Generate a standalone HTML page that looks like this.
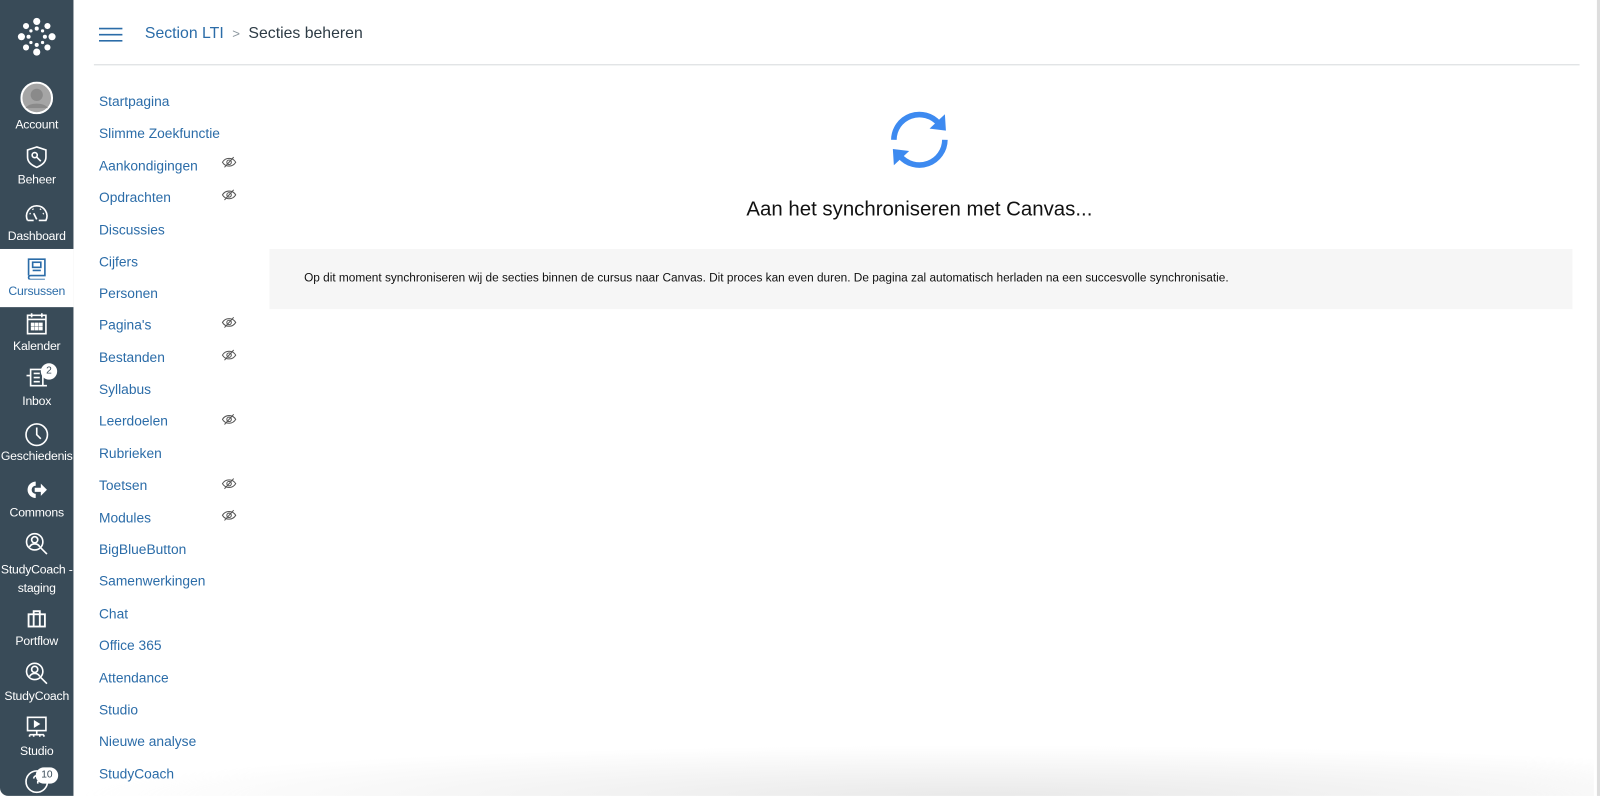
<!DOCTYPE html>
<html><head><meta charset="utf-8"><style>
*{margin:0;padding:0;box-sizing:border-box}
body{width:1600px;height:796px;overflow:hidden;background:#fff;font-family:"Liberation Sans",sans-serif;position:relative}
#wrap{position:absolute;left:0;top:0;width:1568px;height:780px;transform:scale(1.0204);transform-origin:0 0}
#side{position:absolute;left:0;top:0;width:72px;height:780px;background:#394b58;border-bottom-left-radius:8px}
.ic{position:absolute;left:24px}
.lbl{position:absolute;left:0;width:72px;text-align:center;color:#fff;font-size:12px;letter-spacing:-0.2px}
#cur{position:absolute;left:0;top:244px;width:72px;height:57px;background:#fff}
.cn{position:absolute;left:97px;color:#2b6ca8;font-size:13.5px}
.eye{position:absolute;left:217px}
#hdr{position:absolute;left:92px;top:63px;width:1456px;height:1px;background:#d7dadd}
.shadow{position:absolute;bottom:0;height:50px;background:radial-gradient(ellipse at 60% 100%,rgba(215,215,215,0.55),rgba(255,255,255,0) 70%);pointer-events:none}
</style></head><body><div id="wrap">
<div id="side">
<svg class="ic" style="left:17px;top:17px" width="38" height="38" viewBox="0 0 38 38" fill="#fff">
<circle cx="19" cy="4" r="3.5"/><circle cx="19" cy="34" r="3.5"/><circle cx="4" cy="19" r="3.5"/><circle cx="34" cy="19" r="3.5"/>
<circle cx="8.5" cy="8.5" r="3"/><circle cx="29.5" cy="8.5" r="3"/><circle cx="8.5" cy="29.5" r="3"/><circle cx="29.5" cy="29.5" r="3"/>
<circle cx="19" cy="11" r="2"/><circle cx="19" cy="27" r="2"/><circle cx="11" cy="19" r="2"/><circle cx="27" cy="19" r="2"/>
<circle cx="13.3" cy="13.3" r="1.6"/><circle cx="24.7" cy="13.3" r="1.6"/><circle cx="13.3" cy="24.7" r="1.6"/><circle cx="24.7" cy="24.7" r="1.6"/>
</svg>
<svg class="ic" style="left:20px;top:80px" width="32" height="32" viewBox="0 0 32 32"><circle cx="16" cy="16" r="15" fill="#a5a5a5" stroke="#fff" stroke-width="2"/><circle cx="16" cy="13" r="6" fill="#8a8a8a"/><path d="M5 26c3-6 19-6 22 0" fill="#8a8a8a"/></svg>
<div class="lbl" style="top:115px">Account</div>
<svg class="ic" style="left:25px;top:143px" width="22" height="22" viewBox="0 0 22 22" fill="none" stroke="#fff" stroke-width="1.6"><path d="M11 1l9 3v7c0 5-4 8-9 10C6 19 2 16 2 11V4z"/><circle cx="9" cy="9" r="2.5"/><path d="M11 11l4 4"/></svg>
<div class="lbl" style="top:169px">Beheer</div>
<svg class="ic" style="left:24px;top:199px" width="24" height="20" viewBox="0 0 24 20" fill="none" stroke="#fff" stroke-width="1.6"><path d="M3 17A10 10 0 1 1 21 17H14M3 17h6"/><path d="M12 16l-3-6"/><path d="M5 10l1 .6M8 5.5l.6 1M16 5.5l-.6 1M19 10l-1 .6"/></svg>
<div class="lbl" style="top:224px">Dashboard</div>
<div id="cur"></div>
<svg class="ic" style="left:26px;top:252px" width="20" height="22" viewBox="0 0 20 22" fill="none" stroke="#2b6ca8" stroke-width="1.6"><path d="M2 18V2h16v16H4a2 2 0 0 0 0 4h14"/><rect x="6" y="5" width="8" height="5"/><path d="M6 13h8"/></svg>
<div class="lbl" style="top:278px;color:#2b6ca8">Cursussen</div>
<svg class="ic" style="left:25px;top:306px" width="22" height="22" viewBox="0 0 22 22" fill="none" stroke="#fff" stroke-width="1.6"><rect x="2" y="3" width="18" height="18"/><path d="M2 7h18M6 1v4M16 1v4"/><path d="M6 11h2v2H6zM10 11h2v2h-2zM14 11h2v2h-2zM6 15h2v2H6zM10 15h2v2h-2zM14 15h2v2h-2z" fill="#fff"/></svg>
<div class="lbl" style="top:332px">Kalender</div>
<svg class="ic" style="left:25px;top:361px" width="22" height="20" viewBox="0 0 22 20" fill="none" stroke="#fff" stroke-width="1.6"><path d="M5 1h12v16H5zM1 7h4v10h16"/><path d="M8 5h6M8 9h6M8 13h6"/></svg>
<div style="position:absolute;left:40px;top:356px;width:16px;height:16px;border-radius:8px;background:#fff;color:#394b58;font-size:10px;text-align:center;line-height:16px">2</div>
<div class="lbl" style="top:386px">Inbox</div>
<svg class="ic" style="left:24px;top:414px" width="24" height="24" viewBox="0 0 24 24" fill="none" stroke="#fff" stroke-width="1.6"><circle cx="12" cy="12" r="10.5"/><path d="M12 5v7l4 4"/></svg>
<div class="lbl" style="top:440px">Geschiedenis</div>
<svg class="ic" style="left:25px;top:470px" width="22" height="20" viewBox="0 0 22 20" fill="#fff"><path d="M10 2a8 8 0 1 0 0 16v-4a4 4 0 1 1 0-8z"/><path d="M9 8h6V4l6 6-6 6v-4H9z"/></svg>
<div class="lbl" style="top:495px">Commons</div>
<svg class="ic" style="left:24px;top:521px" width="24" height="24" viewBox="0 0 24 24" fill="none" stroke="#fff" stroke-width="1.6"><circle cx="10" cy="10" r="8"/><circle cx="10" cy="8" r="3"/><path d="M5 15c2-4 8-4 10 0M16 16l6 6"/></svg>
<div class="lbl" style="top:549px;line-height:18px">StudyCoach -<br>staging</div>
<svg class="ic" style="left:26px;top:597px" width="20" height="18" viewBox="0 0 20 18" fill="none" stroke="#fff" stroke-width="1.8"><rect x="2" y="5" width="16" height="12"/><path d="M7 5V2h6v3M7 5v12M13 5v12"/></svg>
<div class="lbl" style="top:621px">Portflow</div>
<svg class="ic" style="left:24px;top:648px" width="24" height="24" viewBox="0 0 24 24" fill="none" stroke="#fff" stroke-width="1.6"><circle cx="10" cy="10" r="8"/><circle cx="10" cy="8" r="3"/><path d="M5 15c2-4 8-4 10 0M16 16l6 6"/></svg>
<div class="lbl" style="top:675px">StudyCoach</div>
<svg class="ic" style="left:24px;top:702px" width="24" height="24" viewBox="0 0 24 24" fill="none" stroke="#fff" stroke-width="1.6"><rect x="3" y="1" width="18" height="13"/><path d="M10 5l4 2.5-4 2.5z" fill="#fff"/><path d="M12 14v4M5 18h14M5 18v2M19 18v2M9 18v2M15 18v2"/></svg>
<div class="lbl" style="top:729px">Studio</div>
<svg class="ic" style="left:24px;top:754px" width="24" height="24" viewBox="0 0 24 24" fill="none" stroke="#fff" stroke-width="1.6"><circle cx="12" cy="12" r="10.5"/><path d="M9 9a3 3 0 1 1 4 3v2"/></svg>
<div style="position:absolute;left:35px;top:752px;width:22px;height:16px;border-radius:8px;background:#fff;color:#394b58;font-size:10px;text-align:center;line-height:16px">10</div>
</div>

<svg style="position:absolute;left:97px;top:27px" width="23" height="14" viewBox="0 0 23 14" stroke="#2b6ca8" stroke-width="1.5"><path d="M0 1h23M0 7h23M0 13h23"/></svg>
<div style="position:absolute;left:142px;top:24px;font-size:15.5px;color:#2b6ca8">Section LTI <span style="color:#8b969e;font-size:13px;margin:0 4px">&gt;</span> <span style="color:#2d3b45">Secties beheren</span></div>
<div id="hdr"></div>

<div class="cn" style="top:92px">Startpagina</div>
<div class="cn" style="top:123px">Slimme Zoekfunctie</div>
<div class="cn" style="top:155px">Aankondigingen</div>
<div class="cn" style="top:186px">Opdrachten</div>
<div class="cn" style="top:218px">Discussies</div>
<div class="cn" style="top:249px">Cijfers</div>
<div class="cn" style="top:280px">Personen</div>
<div class="cn" style="top:311px">Pagina's</div>
<div class="cn" style="top:343px">Bestanden</div>
<div class="cn" style="top:374px">Syllabus</div>
<div class="cn" style="top:405px">Leerdoelen</div>
<div class="cn" style="top:437px">Rubrieken</div>
<div class="cn" style="top:468px">Toetsen</div>
<div class="cn" style="top:500px">Modules</div>
<div class="cn" style="top:531px">BigBlueButton</div>
<div class="cn" style="top:562px">Samenwerkingen</div>
<div class="cn" style="top:594px">Chat</div>
<div class="cn" style="top:625px">Office 365</div>
<div class="cn" style="top:657px">Attendance</div>
<div class="cn" style="top:688px">Studio</div>
<div class="cn" style="top:719px">Nieuwe analyse</div>
<div class="cn" style="top:751px">StudyCoach</div>

<svg width="0" height="0" style="position:absolute"><defs><g id="eye" fill="none" stroke="#555" stroke-width="1"><path d="M1 6c3-5 10-5 13 0c-3 5-10 5-13 0z"/><circle cx="7.5" cy="6" r="2.2"/><path d="M3 11L12 1"/></g></defs></svg>
<svg class="eye" style="top:153px" width="15" height="12"><use href="#eye"/></svg>
<svg class="eye" style="top:185px" width="15" height="12"><use href="#eye"/></svg>
<svg class="eye" style="top:310px" width="15" height="12"><use href="#eye"/></svg>
<svg class="eye" style="top:342px" width="15" height="12"><use href="#eye"/></svg>
<svg class="eye" style="top:405px" width="15" height="12"><use href="#eye"/></svg>
<svg class="eye" style="top:468px" width="15" height="12"><use href="#eye"/></svg>
<svg class="eye" style="top:499px" width="15" height="12"><use href="#eye"/></svg>

<svg style="position:absolute;left:870px;top:106px" width="62" height="62" viewBox="0 0 62 62" fill="none" stroke="#3d8af0" stroke-width="5.5">
<path d="M6 31A25 25 0 0 1 50 15"/><path d="M56 31A25 25 0 0 1 12 47"/>
<path d="M41 20L57 22L56 6z" fill="#3d8af0" stroke="none"/><path d="M21 42L5 40L6 56z" fill="#3d8af0" stroke="none"/>
</svg>
<div style="position:absolute;left:600px;top:194px;width:602px;text-align:center;font-size:20px;color:#111">Aan het synchroniseren met Canvas...</div>
<div style="position:absolute;left:264px;top:244px;width:1277px;height:59px;background:#f6f6f6"></div>
<div style="position:absolute;left:298px;top:266px;font-size:11.6px;color:#111">Op dit moment synchroniseren wij de secties binnen de cursus naar Canvas. Dit proces kan even duren. De pagina zal automatisch herladen na een succesvolle synchronisatie.</div>
<div style="position:absolute;left:1565px;top:0;width:3px;height:780px;background:#ddd"></div>
<div class="shadow" style="left:72px;width:1490px"></div>
</div></body></html>
